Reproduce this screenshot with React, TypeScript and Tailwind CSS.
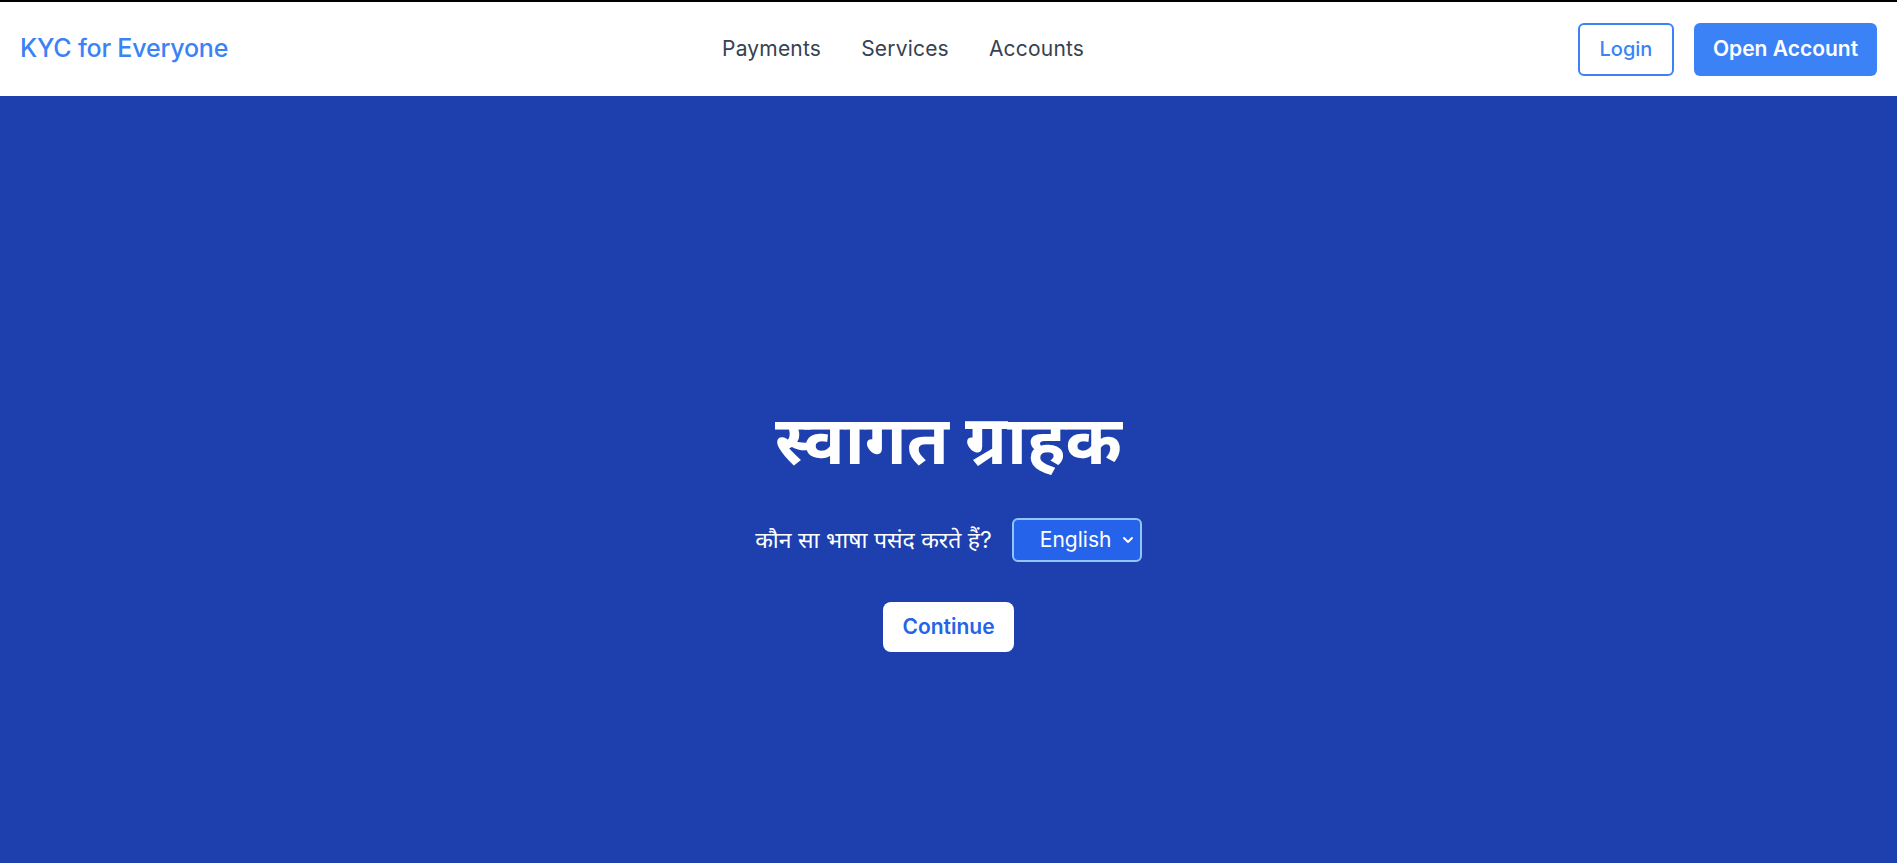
import { ChevronDown } from 'lucide-react'

const font = { fontFamily: "Inter, 'Noto Sans', 'Noto Sans Devanagari', sans-serif" }

function Header() {
  return (
    <header className="flex h-[94px] items-center justify-between bg-white px-5">
      <a href="#" className="text-[25px] font-medium tracking-[-0.2px] text-[#3b82f6]">
        KYC for Everyone
      </a>

      <nav className="flex items-center gap-10 text-[21px] tracking-[0.2px] text-[#374151]">
        <a href="#">Payments</a>
        <a href="#">Services</a>
        <a href="#">Accounts</a>
      </nav>

      <div className="flex items-center gap-5">
        <button className="h-[53px] w-[96px] rounded-md border-2 border-[#3b82f6] text-[20px] font-medium text-[#3b82f6]">
          Login
        </button>
        <button className="h-[53px] w-[183px] rounded-md bg-[#3b82f6] text-[21px] font-semibold text-white">
          Open Account
        </button>
      </div>
    </header>
  )
}

export default function App() {
  return (
    <div style={font} className="min-h-screen bg-[#1e40af]">
      {/* thin dark strip at the very top */}
      <div className="h-[2px] bg-black" />
      <Header />

      {/* Hero */}
      <section className="flex h-[863px] flex-col items-center justify-center text-white">
        <h1 className="text-[68px] leading-[72px] font-bold">स्वागत ग्राहक</h1>

        <div className="mt-[43px] flex items-center gap-5">
          <label className="text-[23px]">कौन सा भाषा पसंद करते हैं?</label>
          <div className="relative">
            <select className="h-[44px] w-[130px] appearance-none rounded-md border-2 border-[#93c5fd] bg-[#2563eb] pl-[26px] text-[21px] text-white outline-none">
              <option>English</option>
              <option>हिन्दी</option>
            </select>
            <ChevronDown
              size={16}
              strokeWidth={3}
              className="pointer-events-none absolute right-[6px] top-1/2 -translate-y-1/2 text-white"
            />
          </div>
        </div>

        <button className="mt-10 h-[50px] w-[131px] rounded-lg bg-white text-[21px] font-semibold text-[#2563eb]">
          Continue
        </button>
      </section>
    </div>
  )
}
